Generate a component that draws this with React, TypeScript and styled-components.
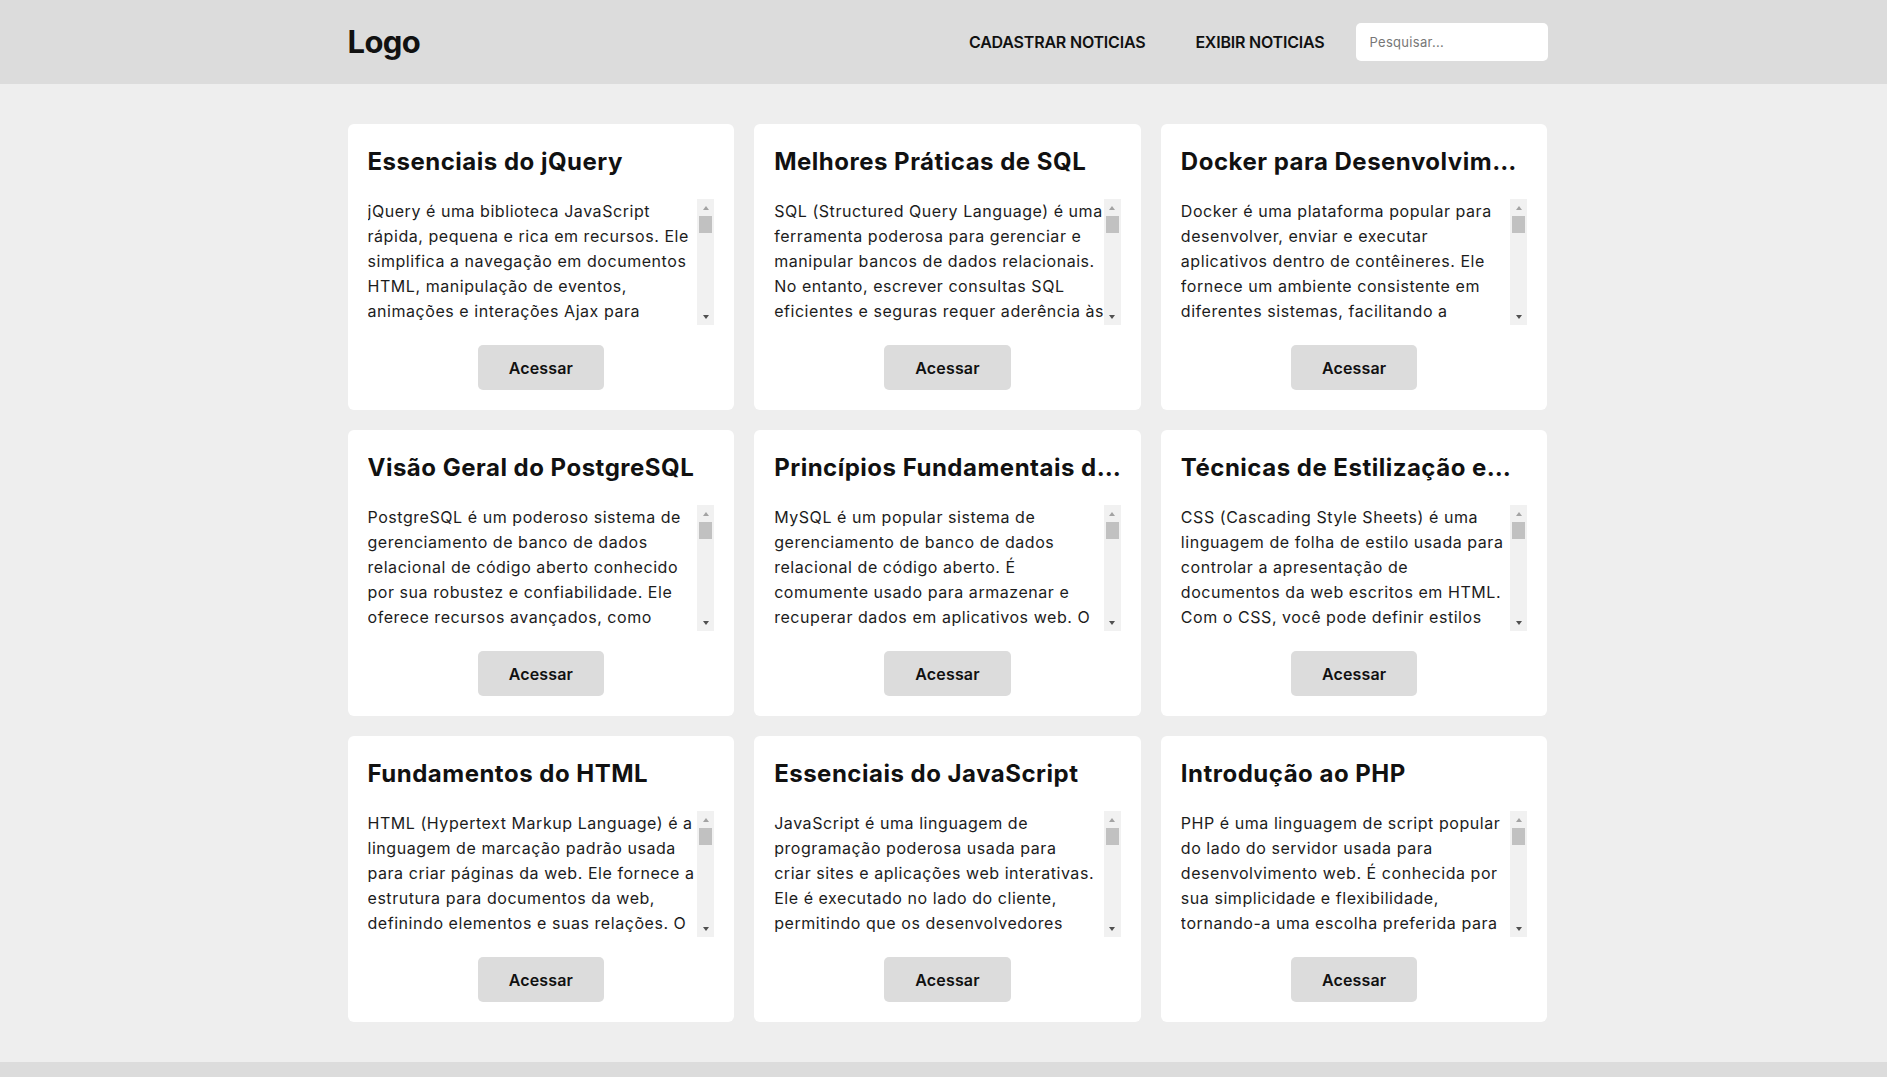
import React from "react";
import styled, { createGlobalStyle } from "styled-components";

const GlobalStyle = createGlobalStyle`
  * { box-sizing: border-box; }
  html, body { margin: 0; padding: 0; }
  body {
    background: #eeeeee;
    font-family: Inter, "Open Sans", "Liberation Sans", sans-serif;
    color: #1a1a1a;
  }
`;

const Page = styled.div`
  min-height: 100vh;
  display: flex;
  flex-direction: column;
`;

const Header = styled.header`
  background: #dcdcdc;
  height: 84px;
  flex-shrink: 0;
`;

const Container = styled.div`
  width: 1200px;
  box-sizing: content-box;
  padding-left: 8px;
  margin: 0 auto;
`;

const HeaderInner = styled(Container)`
  height: 100%;
  display: flex;
  align-items: center;
  justify-content: space-between;
  padding-bottom: 5px;
`;

const Logo = styled.a`
  font-size: 31px;
  font-weight: 700;
  letter-spacing: -0.6px;
  color: #111;
  text-decoration: none;
  line-height: 1;
  margin-bottom: 2px;
`;

const Nav = styled.nav`
  display: flex;
  align-items: center;
  gap: 31px;
`;

const NavLinks = styled.div`
  display: flex;
  align-items: center;
  gap: 50px;
`;

const NavLink = styled.a`
  font-size: 16px;
  font-weight: 600;
  color: #111;
  text-decoration: none;
  letter-spacing: -0.2px;
`;

const Search = styled.input`
  width: 192px;
  height: 38px;
  border: none;
  border-radius: 5px;
  background: #ffffff;
  padding: 0 14px;
  font-family: Inter, "Open Sans", sans-serif;
  font-size: 13px;
  letter-spacing: 0.3px;
  color: #222;
  outline: none;
  &::placeholder {
    color: #777;
  }
`;

const Main = styled.main`
  flex: 1;
  padding: 40px 0;
`;

const Grid = styled(Container)`
  display: grid;
  grid-template-columns: repeat(3, 1fr);
  gap: 20px;
`;

const Card = styled.article`
  background: #ffffff;
  border-radius: 6px;
  padding: 20px;
  display: flex;
  flex-direction: column;
  min-width: 0;
`;

const Title = styled.h2`
  margin: 0 0 20px;
  font-size: 24px;
  line-height: 35px;
  font-weight: 700;
  letter-spacing: 0.5px;
  color: #111;
  white-space: nowrap;
  overflow: hidden;
  text-overflow: ellipsis;
`;

const DescBox = styled.div`
  height: 126px;
  display: flex;
`;

const DescText = styled.p`
  flex: 1;
  min-width: 0;
  margin: 0;
  overflow: hidden;
  font-size: 16px;
  line-height: 25px;
  letter-spacing: 0.55px;
  color: #1c1c1c;
`;

const Line = styled.span`
  display: block;
  white-space: nowrap;
`;

const ScrollBar = styled.div`
  width: 17px;
  flex-shrink: 0;
  background: #f1f1f1;
  display: flex;
  flex-direction: column;
`;

const ScrollArrow = styled.div<{ $dir: "up" | "down"; $active?: boolean }>`
  height: 17px;
  display: flex;
  align-items: center;
  justify-content: center;
  &::before {
    content: "";
    width: 0;
    height: 0;
    border-left: 3.5px solid transparent;
    border-right: 3.5px solid transparent;
    ${(p) =>
      p.$dir === "up"
        ? `border-bottom: 4px solid ${p.$active ? "#505050" : "#a3a3a3"}; margin-top: 1px;`
        : `border-top: 4px solid ${p.$active ? "#505050" : "#a3a3a3"};`}
  }
`;

const ScrollRail = styled.div`
  flex: 1;
  padding: 0 2px;
`;

const ScrollThumb = styled.div`
  height: 17px;
  background: #c1c1c1;
`;

const Button = styled.button`
  align-self: center;
  margin-top: 20px;
  height: 45px;
  padding: 0 31px;
  border: none;
  border-radius: 5px;
  background: #dcdcdc;
  font-family: Inter, "Open Sans", sans-serif;
  font-size: 16px;
  font-weight: 600;
  letter-spacing: 0.15px;
  color: #111;
  cursor: pointer;
`;

const Footer = styled.footer`
  background: #dcdcdc;
  height: 60px;
  flex-shrink: 0;
`;

type News = { title: string; lines: string[] };

const news: News[] = [
  {
    title: "Essenciais do jQuery",
    lines: [
      "jQuery é uma biblioteca JavaScript",
      "rápida, pequena e rica em recursos. Ele",
      "simplifica a navegação em documentos",
      "HTML, manipulação de eventos,",
      "animações e interações Ajax para",
    ],
  },
  {
    title: "Melhores Práticas de SQL",
    lines: [
      "SQL (Structured Query Language) é uma",
      "ferramenta poderosa para gerenciar e",
      "manipular bancos de dados relacionais.",
      "No entanto, escrever consultas SQL",
      "eficientes e seguras requer aderência às",
    ],
  },
  {
    title: "Docker para Desenvolvimento",
    lines: [
      "Docker é uma plataforma popular para",
      "desenvolver, enviar e executar",
      "aplicativos dentro de contêineres. Ele",
      "fornece um ambiente consistente em",
      "diferentes sistemas, facilitando a",
    ],
  },
  {
    title: "Visão Geral do PostgreSQL",
    lines: [
      "PostgreSQL é um poderoso sistema de",
      "gerenciamento de banco de dados",
      "relacional de código aberto conhecido",
      "por sua robustez e confiabilidade. Ele",
      "oferece recursos avançados, como",
    ],
  },
  {
    title: "Princípios Fundamentais do MySQL",
    lines: [
      "MySQL é um popular sistema de",
      "gerenciamento de banco de dados",
      "relacional de código aberto. É",
      "comumente usado para armazenar e",
      "recuperar dados em aplicativos web. O",
    ],
  },
  {
    title: "Técnicas de Estilização em CSS",
    lines: [
      "CSS (Cascading Style Sheets) é uma",
      "linguagem de folha de estilo usada para",
      "controlar a apresentação de",
      "documentos da web escritos em HTML.",
      "Com o CSS, você pode definir estilos",
    ],
  },
  {
    title: "Fundamentos do HTML",
    lines: [
      "HTML (Hypertext Markup Language) é a",
      "linguagem de marcação padrão usada",
      "para criar páginas da web. Ele fornece a",
      "estrutura para documentos da web,",
      "definindo elementos e suas relações. O",
    ],
  },
  {
    title: "Essenciais do JavaScript",
    lines: [
      "JavaScript é uma linguagem de",
      "programação poderosa usada para",
      "criar sites e aplicações web interativas.",
      "Ele é executado no lado do cliente,",
      "permitindo que os desenvolvedores",
    ],
  },
  {
    title: "Introdução ao PHP",
    lines: [
      "PHP é uma linguagem de script popular",
      "do lado do servidor usada para",
      "desenvolvimento web. É conhecida por",
      "sua simplicidade e flexibilidade,",
      "tornando-a uma escolha preferida para",
    ],
  },
];

export default function App() {
  return (
    <Page>
      <GlobalStyle />
      <Header>
        <HeaderInner>
          <Logo href="#">Logo</Logo>
          <Nav>
            <NavLinks>
              <NavLink href="#">CADASTRAR NOTICIAS</NavLink>
              <NavLink href="#">EXIBIR NOTICIAS</NavLink>
            </NavLinks>
            <Search type="text" placeholder="Pesquisar..." />
          </Nav>
        </HeaderInner>
      </Header>
      <Main>
        <Grid>
          {news.map((n) => (
            <Card key={n.title}>
              <Title>{n.title}</Title>
              <DescBox>
                <DescText>
                  {n.lines.map((l, i) => (
                    <Line key={i}>{l}</Line>
                  ))}
                </DescText>
                <ScrollBar aria-hidden="true">
                  <ScrollArrow $dir="up" />
                  <ScrollRail>
                    <ScrollThumb />
                  </ScrollRail>
                  <ScrollArrow $dir="down" $active />
                </ScrollBar>
              </DescBox>
              <Button>Acessar</Button>
            </Card>
          ))}
        </Grid>
      </Main>
      <Footer />
    </Page>
  );
}
